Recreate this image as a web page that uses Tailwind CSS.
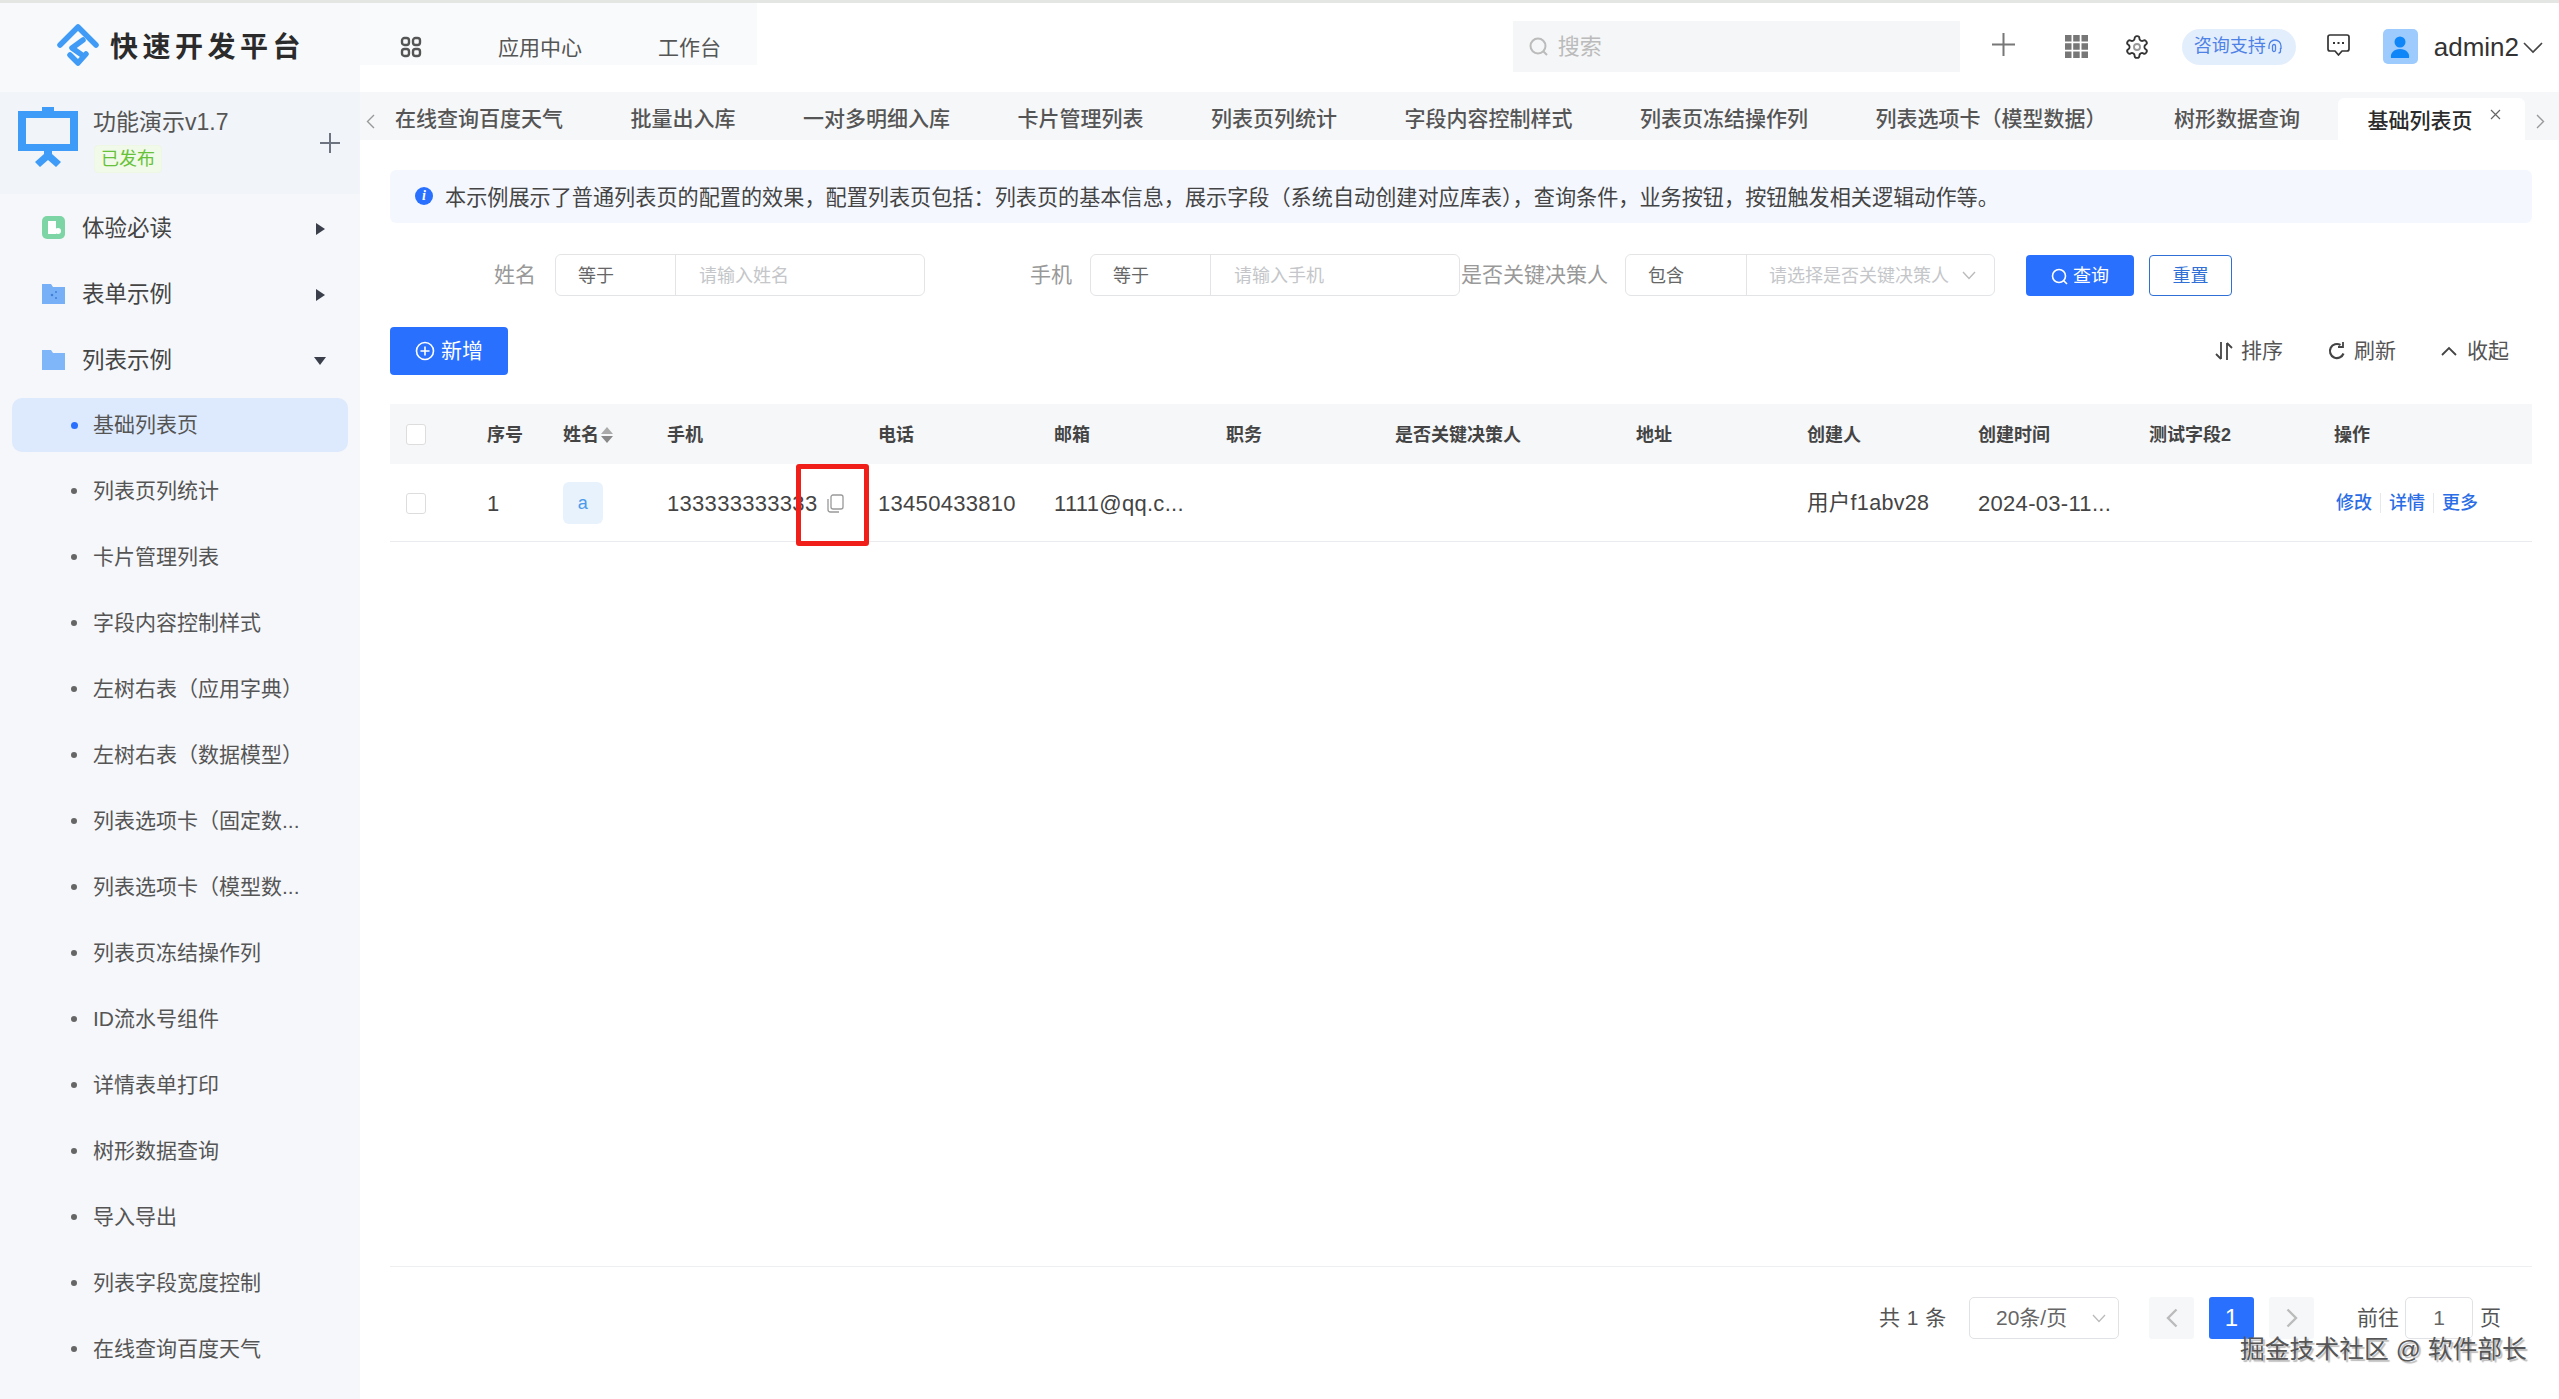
<!DOCTYPE html>
<html lang="zh-CN">
<head>
    <meta charset="UTF-8">
    <title>快速开发平台</title>
    <script src="https://cdn.jsdelivr.net/npm/@tailwindcss/browser@4"></script>
</head>
<body class="bg-white font-['Liberation_Sans','Noto_Sans_CJK_SC',sans-serif] text-[#333]">
<div class="relative w-[2559px] h-[1399px] overflow-hidden flex flex-col">
    <div class="h-[3px] bg-[#e4e6e4]"></div>
    <div class="flex flex-1 min-h-0">

        <!-- sidebar -->
        <aside class="w-[360px] shrink-0 bg-[#f5f7fa] flex flex-col">
            <div class="h-[89px] flex items-center pl-[50px] bg-[#f8f9fb]">
                <svg class="w-[60px] h-[60px] -mt-[5px]" viewBox="0 0 60 60" fill="none" stroke="#3f9bf5" stroke-width="5.500" stroke-linecap="round" stroke-linejoin="round">
                    <path d="M10 30L28 12 46 30"/>
                    <path d="M33 25L22 33 32 40"/>
                    <path d="M20 40l8 8 8-9"/>
                </svg>
                <span class="text-[28px] font-bold tracking-[4.500px] text-[#2b2b2b]">快速开发平台</span>
            </div>
            <div class="h-[102px] bg-[#f1f4f9] flex pl-[18px] pr-[20px] pt-[15px]">
                <svg class="w-[60px] h-[60px] shrink-0" viewBox="0 0 60 60" fill="#3f9bf8">
                    <path d="M24 0h12v4h24v40H34v3l9 8-5 5-8-7-8 7-5-5 9-8v-3H0V4h24zM8 11v26h44V11z" fill-rule="evenodd"/>
                </svg>
                <div class="ml-[15px] flex-1">
                    <div class="text-[23px] leading-[30px] text-[#555]">功能演示v1.7</div>
                    <div class="mt-[8px] ml-[1px] w-[68px] h-[28px] bg-[#f1f9e9] border border-[#eef6e4] rounded text-[18px] leading-[26px] text-center text-[#67c23a]">已发布</div>
                </div>
                <svg class="w-[20px] h-[20px] mt-[26px]" viewBox="0 0 20 20" stroke="#6d7480" stroke-width="2"><path d="M10 0v20M0 10h20"/></svg>
            </div>

            <div class="flex items-center h-[66px] pt-[3px] pl-[42px] pr-[35px] text-[22.500px] text-[#444]">
                <svg class="w-[23px] h-[23px] mr-[17px] -mt-[3px]" viewBox="0 0 23 23"><rect width="23" height="23" rx="5" fill="#7dd5a5"/><path d="M6 5h8v13H6z" fill="#fff"/><circle cx="16" cy="15" r="3" fill="#fff"/></svg>
                <span class="flex-1">体验必读</span>
                <span class="w-0 h-0 border-y-[6px] border-y-transparent border-l-[9px] border-l-[#3a3f4b]"></span>
            </div>
            <div class="flex items-center h-[66px] pt-[3px] pl-[42px] pr-[35px] text-[22.500px] text-[#444]">
                <svg class="w-[23px] h-[23px] mr-[17px] -mt-[3px]" viewBox="0 0 23 23"><path d="M0 2h9l2 3h12v17H0z" fill="#78b0f7"/><circle cx="10" cy="13" r="1.300" fill="#3f7fd8"/><circle cx="14" cy="10" r="1" fill="#3f7fd8"/><circle cx="14" cy="16" r="1" fill="#3f7fd8"/></svg>
                <span class="flex-1">表单示例</span>
                <span class="w-0 h-0 border-y-[6px] border-y-transparent border-l-[9px] border-l-[#3a3f4b]"></span>
            </div>
            <div class="flex items-center h-[66px] pt-[3px] pl-[42px] pr-[35px] text-[22.500px] text-[#444]">
                <svg class="w-[23px] h-[23px] mr-[17px] -mt-[3px]" viewBox="0 0 23 23"><path d="M0 2h9l2 3h12v17H0z" fill="#7fb5f9"/></svg>
                <span class="flex-1">列表示例</span>
                <span class="w-0 h-0 border-x-[6px] border-x-transparent border-t-[8px] border-t-[#3a3f4b] -mr-[1px]"></span>
            </div>

            <ul class="text-[21px] text-[#555]">
                <li class="h-[54px] my-[6px] mx-[12px] rounded-[10px] bg-[#dde9fc] flex items-center pl-[59px]"><span class="w-[7px] h-[7px] rounded-full bg-[#2970ff] mr-[15px]"></span>基础列表页</li>
                <li class="h-[66px] flex items-center pl-[71px]"><span class="w-[6px] h-[6px] rounded-full bg-[#666] mr-[16px]"></span>列表页列统计</li>
                <li class="h-[66px] flex items-center pl-[71px]"><span class="w-[6px] h-[6px] rounded-full bg-[#666] mr-[16px]"></span>卡片管理列表</li>
                <li class="h-[66px] flex items-center pl-[71px]"><span class="w-[6px] h-[6px] rounded-full bg-[#666] mr-[16px]"></span>字段内容控制样式</li>
                <li class="h-[66px] flex items-center pl-[71px]"><span class="w-[6px] h-[6px] rounded-full bg-[#666] mr-[16px]"></span>左树右表（应用字典）</li>
                <li class="h-[66px] flex items-center pl-[71px]"><span class="w-[6px] h-[6px] rounded-full bg-[#666] mr-[16px]"></span>左树右表（数据模型）</li>
                <li class="h-[66px] flex items-center pl-[71px]"><span class="w-[6px] h-[6px] rounded-full bg-[#666] mr-[16px]"></span>列表选项卡（固定数...</li>
                <li class="h-[66px] flex items-center pl-[71px]"><span class="w-[6px] h-[6px] rounded-full bg-[#666] mr-[16px]"></span>列表选项卡（模型数...</li>
                <li class="h-[66px] flex items-center pl-[71px]"><span class="w-[6px] h-[6px] rounded-full bg-[#666] mr-[16px]"></span>列表页冻结操作列</li>
                <li class="h-[66px] flex items-center pl-[71px]"><span class="w-[6px] h-[6px] rounded-full bg-[#666] mr-[16px]"></span>ID流水号组件</li>
                <li class="h-[66px] flex items-center pl-[71px]"><span class="w-[6px] h-[6px] rounded-full bg-[#666] mr-[16px]"></span>详情表单打印</li>
                <li class="h-[66px] flex items-center pl-[71px]"><span class="w-[6px] h-[6px] rounded-full bg-[#666] mr-[16px]"></span>树形数据查询</li>
                <li class="h-[66px] flex items-center pl-[71px]"><span class="w-[6px] h-[6px] rounded-full bg-[#666] mr-[16px]"></span>导入导出</li>
                <li class="h-[66px] flex items-center pl-[71px]"><span class="w-[6px] h-[6px] rounded-full bg-[#666] mr-[16px]"></span>列表字段宽度控制</li>
                <li class="h-[66px] flex items-center pl-[71px]"><span class="w-[6px] h-[6px] rounded-full bg-[#666] mr-[16px]"></span>在线查询百度天气</li>
            </ul>
        </aside>

        <main class="flex-1 min-w-0 flex flex-col">
            <!-- top nav -->
            <header class="h-[89px] shrink-0 flex items-start">
                <div class="w-[397px] h-[62px] bg-[#f9fafb] flex items-center pl-[40px] pt-[28px] text-[21px] text-[#555]">
                    <svg class="w-[22px] h-[22px] -mt-[2px]" viewBox="0 0 22 22" fill="none" stroke="#555" stroke-width="2.400"><rect x="2" y="2" width="7" height="7" rx="2.500"/><rect x="13" y="2" width="7" height="7" rx="2.500"/><rect x="2" y="13" width="7" height="7" rx="2.500"/><rect x="13" y="13" width="7" height="7" rx="2.500"/></svg>
                    <span class="ml-[76px]">应用中心</span>
                    <span class="ml-[76px]">工作台</span>
                </div>
                <div class="ml-auto pr-[16px] h-full flex items-center">
                    <div class="w-[447px] h-[51px] bg-[#f5f6f7] flex items-center pl-[16px] text-[22px] text-[#bbb] -mt-[2px]">
                        <svg class="w-[20px] h-[20px] mr-[9px]" viewBox="0 0 20 20" fill="none" stroke="#bbb" stroke-width="2"><circle cx="9" cy="9" r="7.500"/><path d="M14.500 14.500L18 18"/></svg>
                        搜索
                    </div>
                    <svg class="w-[23px] h-[23px] ml-[32px] -mt-[6px]" viewBox="0 0 23 23" stroke="#777" stroke-width="2"><path d="M11.500 0v23M0 11.500h23"/></svg>
                    <svg class="w-[23px] h-[23px] ml-[50px] -mt-[2px]" viewBox="0 0 23 23" fill="#777"><path d="M0 0h6.500v6.500H0zM8.200 0h6.500v6.500H8.200zM16.500 0H23v6.500h-6.500zM0 8.200h6.500v6.500H0zM8.200 8.200h6.500v6.500H8.200zM16.500 8.200H23v6.500h-6.500zM0 16.500h6.500V23H0zM8.200 16.500h6.500V23H8.200zM16.500 16.500H23V23h-6.500z"/></svg>
                    <svg class="w-[26px] h-[26px] ml-[36px] -mt-[2px]" viewBox="0 0 24 24" fill="none" stroke="#333" stroke-width="1.700" stroke-linejoin="round"><path d="M12.220 2h-.44a2 2 0 0 0-2 2v.18a2 2 0 0 1-1 1.730l-.43.250a2 2 0 0 1-2 0l-.15-.08a2 2 0 0 0-2.730.730l-.22.380a2 2 0 0 0 .730 2.730l.15.100a2 2 0 0 1 1 1.720v.510a2 2 0 0 1-1 1.740l-.15.090a2 2 0 0 0-.730 2.730l.22.380a2 2 0 0 0 2.730.730l.15-.08a2 2 0 0 1 2 0l.43.250a2 2 0 0 1 1 1.730V20a2 2 0 0 0 2 2h.44a2 2 0 0 0 2-2v-.18a2 2 0 0 1 1-1.730l.43-.25a2 2 0 0 1 2 0l.15.08a2 2 0 0 0 2.730-.73l.22-.39a2 2 0 0 0-.73-2.730l-.15-.08a2 2 0 0 1-1-1.740v-.5a2 2 0 0 1 1-1.740l.15-.09a2 2 0 0 0 .73-2.730l-.22-.38a2 2 0 0 0-2.730-.73l-.15.08a2 2 0 0 1-2 0l-.43-.25a2 2 0 0 1-1-1.730V4a2 2 0 0 0-2-2z"/><circle cx="12" cy="12" r="2.800" stroke="#999"/></svg>
                    <div class="ml-[32px] w-[114px] h-[36px] rounded-full bg-[#e3eefc] text-[#4f82e6] text-[18px] flex items-center pl-[12px] -mt-[2px]">咨询支持<svg class="w-[16px] h-[16px] ml-[1px]" viewBox="0 0 16 16" fill="none" stroke="#4f82e6" stroke-width="1.300"><path d="M2 10V7a6 6 0 0112 0v3"/><rect x="5.500" y="5.500" width="3" height="7" rx="1.500"/><path d="M13.500 9v3a2 2 0 01-2 2"/></svg></div>
                    <svg class="w-[25px] h-[24px] ml-[30px] -mt-[5px]" viewBox="0 0 25 24" fill="none" stroke="#333" stroke-width="1.700" stroke-linejoin="round"><path d="M4 2h17a2 2 0 012 2v12a2 2 0 01-2 2h-5l-3.500 4-3.500-4H4a2 2 0 01-2-2V4a2 2 0 012-2z"/><path d="M7 10h2M11.500 10h2M16 10h2" stroke-width="2.200"/></svg>
                    <div class="ml-[32px] w-[35px] h-[35px] rounded-[5px] bg-[#9dcbfd] flex items-center justify-center -mt-[2px]">
                        <svg class="w-[20px] h-[22px]" viewBox="0 0 20 22" fill="#0f86f8"><circle cx="10" cy="6" r="5.500"/><path d="M1 22c-1-5 3-9 9-9s10 4 9 9z"/></svg>
                    </div>
                    <span class="ml-[16px] text-[26px] text-[#333]">admin2</span>
                    <svg class="w-[20px] h-[12px] ml-[4px]" viewBox="0 0 20 12" fill="none" stroke="#444" stroke-width="1.600"><path d="M1 1l9 9 9-9"/></svg>
                </div>
            </header>

            <!-- tabs -->
            <nav class="relative h-[48px] shrink-0 bg-[#f5f7f9] flex items-center gap-[67.500px] pl-[35px] text-[21px] font-medium text-[#555] whitespace-nowrap">
                <svg class="absolute left-[6px] top-[22px] w-[9px] h-[15px]" viewBox="0 0 9 15" fill="none" stroke="#999" stroke-width="1.400"><path d="M8 1L1.500 7.500 8 14"/></svg>
                <span class="pt-[6px]">在线查询百度天气</span>
                <span class="pt-[6px]">批量出入库</span>
                <span class="pt-[6px]">一对多明细入库</span>
                <span class="pt-[6px]">卡片管理列表</span>
                <span class="pt-[6px]">列表页列统计</span>
                <span class="pt-[6px]">字段内容控制样式</span>
                <span class="pt-[6px]">列表页冻结操作列</span>
                <span class="pt-[6px]">列表选项卡（模型数据）</span>
                <span class="pt-[6px]">树形数据查询</span>
                <div class="self-end -ml-[30px] h-[42px] w-[187px] bg-white rounded-t-[6px] flex items-center pl-[30px] pt-[4px] text-[#2b2b2b] relative">
                    基础列表页
                    <svg class="absolute left-[152px] top-[11px] w-[11px] h-[11px]" viewBox="0 0 11 11" stroke="#666" stroke-width="1.200"><path d="M1 1l9 9M10 1l-9 9"/></svg>
                </div>
                <svg class="absolute right-[14px] top-[22px] w-[9px] h-[15px]" viewBox="0 0 9 15" fill="none" stroke="#999" stroke-width="1.400"><path d="M1 1l6.500 6.500L1 14"/></svg>
            </nav>

            <!-- page -->
            <section class="flex-1 min-h-0 flex flex-col pl-[30px] pr-[27px] pt-[30px]">
                <div class="h-[53px] shrink-0 rounded-[6px] bg-[#f4f8fe] flex items-center pl-[25px] pt-[3px] text-[21.150px] text-[#444] whitespace-nowrap">
                    <span class="w-[18px] h-[18px] mr-[12px] -mt-[4px] rounded-full bg-[#2970ff] text-white text-[14px] leading-[18px] text-center italic font-bold font-['Liberation_Serif',serif]">i</span>
                    本示例展示了普通列表页的配置的效果，配置列表页包括：列表页的基本信息，展示字段（系统自动创建对应库表），查询条件，业务按钮，按钮触发相关逻辑动作等。
                </div>

                <!-- query form -->
                <div class="flex items-center h-[42px] mt-[31px] shrink-0">
                    <div class="w-[535px] flex items-center justify-end">
                        <span class="text-[21px] text-[#999] mr-[19px]">姓名</span>
                        <div class="w-[370px] h-[42px] rounded-[6px] border border-[#e2e4e6] flex items-center text-[18px]">
                            <span class="w-[120px] h-full border-r border-[#e2e4e6] flex items-center pl-[22px] pt-[2px] text-[#666]">等于</span>
                            <span class="pl-[23px] pt-[2px] text-[#c4c6c9]">请输入姓名</span>
                        </div>
                    </div>
                    <div class="w-[535px] flex items-center justify-end">
                        <span class="text-[21px] text-[#999] mr-[18px]">手机</span>
                        <div class="w-[370px] h-[42px] rounded-[6px] border border-[#e2e4e6] flex items-center text-[18px]">
                            <span class="w-[120px] h-full border-r border-[#e2e4e6] flex items-center pl-[22px] pt-[2px] text-[#666]">等于</span>
                            <span class="pl-[23px] pt-[2px] text-[#c4c6c9]">请输入手机</span>
                        </div>
                    </div>
                    <div class="w-[535px] flex items-center justify-end">
                        <span class="text-[21px] text-[#999] mr-[17px]">是否关键决策人</span>
                        <div class="w-[370px] h-[42px] rounded-[6px] border border-[#e2e4e6] flex items-center text-[18px]">
                            <span class="w-[121px] h-full border-r border-[#e2e4e6] flex items-center pl-[22px] pt-[2px] text-[#666]">包含</span>
                            <span class="pl-[22px] pt-[2px] text-[#c4c6c9] whitespace-nowrap">请选择是否关键决策人</span>
                            <svg class="w-[14px] h-[9px] ml-[13px]" viewBox="0 0 14 9" fill="none" stroke="#bbb" stroke-width="1.400"><path d="M1 1l6 6.500L13 1"/></svg>
                        </div>
                    </div>
                    <div class="ml-[31px] w-[108px] h-[41px] rounded-[4px] bg-[#2970ff] text-white text-[18px] pt-[2px] flex items-center justify-center">
                        <svg class="w-[17px] h-[17px] mr-[5px]" viewBox="0 0 17 17" fill="none" stroke="#fff" stroke-width="1.600"><circle cx="8" cy="8" r="6.500"/><path d="M12.500 12.500L16 16"/></svg>查询
                    </div>
                    <div class="ml-[15px] w-[83px] h-[41px] rounded-[4px] border border-[#2f6fd6] text-[#2f6fd6] text-[18px] pt-[2px] flex items-center justify-center">重置</div>
                </div>

                <!-- toolbar -->
                <div class="flex items-center h-[48px] mt-[31px] shrink-0 text-[21px] text-[#555]">
                    <div class="w-[118px] h-[48px] rounded-[4px] bg-[#2970ff] text-white flex items-center justify-center">
                        <svg class="w-[20px] h-[20px] mr-[6px]" viewBox="0 0 20 20" fill="none" stroke="#fff" stroke-width="1.600"><circle cx="10" cy="10" r="8.500"/><path d="M10 5.500v9M5.500 10h9"/></svg>新增
                    </div>
                    <svg class="ml-auto w-[18px] h-[20px] mr-[8px]" viewBox="0 0 18 20" fill="none" stroke="#444" stroke-width="1.800"><path d="M6 1v17M1 13l5 5M12 19V2M12 2l5 5"/></svg>
                    <span>排序</span>
                    <svg class="ml-[45px] w-[18px] h-[18px] mr-[8px]" viewBox="0 0 18 18" fill="none" stroke="#444" stroke-width="2.200"><path d="M15.500 11.500A7 7 0 1112.500 3"/><path d="M15 0v5h-5" stroke-width="1.800"/></svg>
                    <span>刷新</span>
                    <svg class="ml-[45px] w-[16px] h-[10px] mr-[10px]" viewBox="0 0 16 10" fill="none" stroke="#444" stroke-width="1.800"><path d="M1 9l7-7 7 7"/></svg>
                    <span class="mr-[23px]">收起</span>
                </div>

                <!-- table -->
                <div class="mt-[29px] h-[60px] pt-[2px] shrink-0 bg-[#f5f7f9] grid grid-cols-[97px_76px_104px_211px_176px_172px_169px_241px_171px_171px_171px_185px_1fr] items-center text-[18px] font-bold text-[#444]">
                    <div class="pl-[16px] -mt-[2px]"><div class="w-[20px] h-[21px] rounded-[3px] border border-[#ddd] bg-white"></div></div>
                    <div>序号</div>
                    <div class="flex items-center">姓名
                        <span class="ml-[2px] flex flex-col gap-[2px]">
                            <span class="w-0 h-0 border-x-[6px] border-x-transparent border-b-[7px] border-b-[#aaa]"></span>
                            <span class="w-0 h-0 border-x-[6px] border-x-transparent border-t-[7px] border-t-[#888]"></span>
                        </span>
                    </div>
                    <div>手机</div><div>电话</div><div>邮箱</div><div>职务</div><div>是否关键决策人</div><div>地址</div><div>创建人</div><div>创建时间</div><div>测试字段2</div><div>操作</div>
                </div>
                <div class="h-[78px] pt-[1px] shrink-0 border-b border-[#e9ebee] grid grid-cols-[97px_76px_104px_211px_176px_172px_169px_241px_171px_171px_171px_185px_1fr] items-center text-[22px] tracking-[0.300px] text-[#444] whitespace-nowrap">
                    <div class="pl-[16px]"><div class="w-[20px] h-[21px] rounded-[3px] border border-[#ddd] bg-white"></div></div>
                    <div>1</div>
                    <div><span class="block w-[40px] h-[42px] rounded-[6px] bg-[#e8f2fd] text-[#4b9bea] text-[18px] leading-[42px] text-center">a</span></div>
                    <div class="flex items-center">133333333333
                        <svg class="w-[18px] h-[19px] ml-[9px]" viewBox="0 0 18 19" fill="none" stroke="#999" stroke-width="1.300"><rect x="5" y="1" width="12" height="14" rx="2"/><path d="M2 5v10.500A2.500 2.500 0 004.500 18H13"/></svg>
                    </div>
                    <div>13450433810</div>
                    <div>1111@qq.c...</div>
                    <div></div><div></div><div></div>
                    <div class="text-[21.500px]">用户f1abv28</div>
                    <div>2024-03-11...</div>
                    <div></div>
                    <div class="flex items-center text-[18px] tracking-normal font-medium text-[#2b6de5] pl-[2px]">
                        <span>修改</span><span class="w-px h-[20px] bg-[#e6e8eb] mx-[8px]"></span><span>详情</span><span class="w-px h-[20px] bg-[#e6e8eb] mx-[8px]"></span><span>更多</span>
                    </div>
                </div>

                <div class="flex-1"></div>

                <!-- pagination -->
                <div class="h-[133px] shrink-0 border-t border-[#eeeff1] pt-[30px]">
                    <div class="flex items-center h-[42px] text-[21px] text-[#555] pl-[1489px]">
                        <span class="w-[90px] whitespace-nowrap tracking-[0.500px]">共 1 条</span>
                        <div class="w-[150px] h-[42px] rounded-[5px] border border-[#e0e2e5] flex items-center pl-[26px] text-[#666]">20条/页
                            <svg class="w-[14px] h-[9px] ml-auto mr-[12px]" viewBox="0 0 14 9" fill="none" stroke="#bbb" stroke-width="1.300"><path d="M1 1l6 6.500L13 1"/></svg>
                        </div>
                        <div class="ml-[30px] w-[45px] h-[42px] rounded-[3px] bg-[#f5f7f9] flex items-center justify-center"><svg class="w-[12px] h-[20px]" viewBox="0 0 12 20" fill="none" stroke="#bbb" stroke-width="2.400"><path d="M10.500 1.500L2 10l8.500 8.500"/></svg></div>
                        <div class="ml-[15px] w-[45px] h-[42px] rounded-[3px] bg-[#2970ff] text-white text-[24px] flex items-center justify-center">1</div>
                        <div class="ml-[15px] w-[45px] h-[42px] rounded-[3px] bg-[#f5f7f9] flex items-center justify-center"><svg class="w-[12px] h-[20px]" viewBox="0 0 12 20" fill="none" stroke="#bbb" stroke-width="2.400"><path d="M1.500 1.500L10 10l-8.500 8.500"/></svg></div>
                        <span class="ml-[43px]">前往</span>
                        <div class="ml-[6px] w-[68px] h-[42px] rounded-[5px] border border-[#e0e2e5] flex items-center justify-center text-[#666]">1</div>
                        <span class="ml-[7px]">页</span>
                    </div>
                </div>
            </section>
        </main>
    </div>

    <!-- watermark laid over the page -->
    <div class="absolute left-[2240px] top-[1333px] text-[24.800px] leading-[34px] text-[#555] whitespace-nowrap [text-shadow:2px_2px_1px_#bbb]">掘金技术社区 @ 软件部长</div>

    <!-- red annotation over the table -->
    <div class="absolute left-[796px] top-[464px] w-[73px] h-[82px] rounded-[3px] border-[5px] border-[#f01f1a]"></div>
</div>
</body>
</html>
